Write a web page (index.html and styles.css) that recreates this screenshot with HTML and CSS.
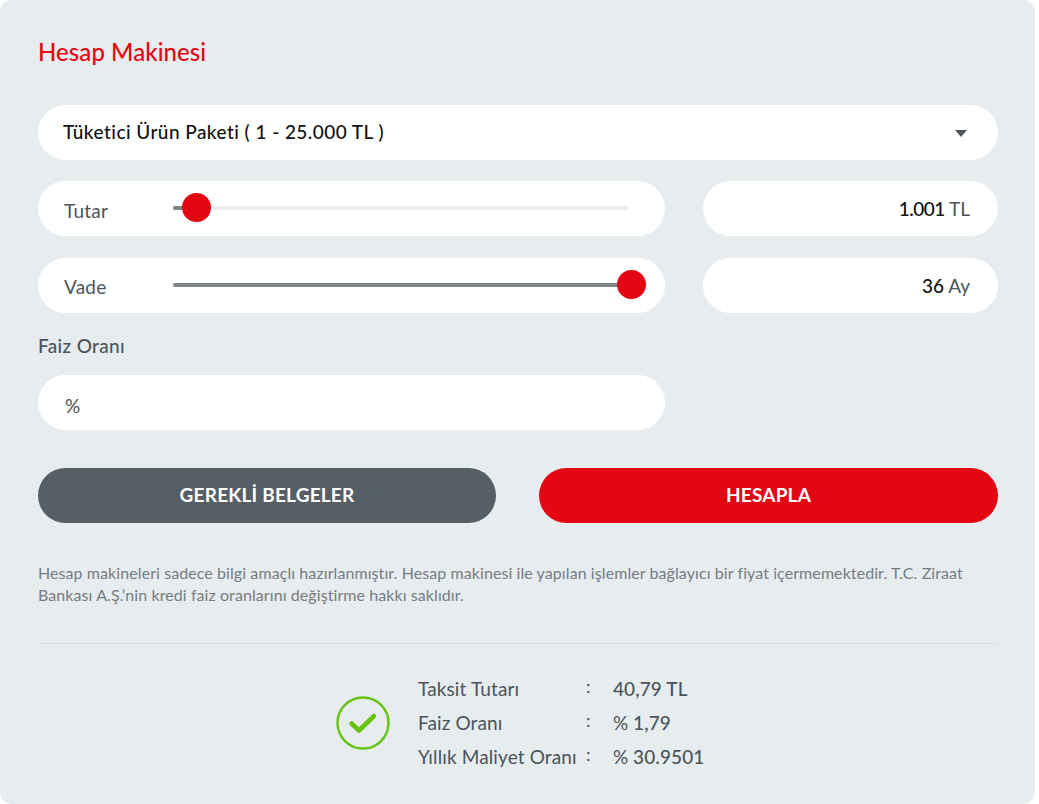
FILE: index.html
```html
<!DOCTYPE html>
<html lang="tr">
<head>
<meta charset="utf-8">
<title>Hesap Makinesi</title>
<link rel="stylesheet" href="styles.css">
</head>
<body>
<main class="card">
  <h1 class="title">Hesap Makinesi</h1>
  <div class="pill select">
    <span class="select-text">Tüketici Ürün Paketi ( 1 - 25.000 TL )</span>
    <span class="caret"></span>
  </div>
  <div class="sliders">
    <div class="pill slider-pill">
      <span class="pill-label">Tutar</span>
      <div class="track"><span class="fill fill-min"></span><span class="thumb thumb-min"></span></div>
    </div>
    <div class="pill value-pill"><b class="narrow">1.001</b> TL</div>
    <div class="pill slider-pill slider-pill-vade">
      <span class="pill-label">Vade</span>
      <div class="track"><span class="fill fill-max"></span><span class="thumb thumb-max"></span></div>
    </div>
    <div class="pill value-pill"><b>36</b> Ay</div>
  </div>
  <div class="field-label">Faiz Oranı</div>
  <div class="pill rate-pill"><span class="pill-label">%</span></div>
  <div class="buttons">
    <div class="btn btn-grey">GEREKLİ BELGELER</div>
    <div class="btn btn-red">HESAPLA</div>
  </div>
  <p class="note">Hesap makineleri sadece bilgi amaçlı hazırlanmıştır. Hesap makinesi ile yapılan işlemler bağlayıcı bir fiyat içermemektedir. T.C. Ziraat Bankası A.Ş.’nin kredi faiz oranlarını değiştirme hakkı saklıdır.</p>
  <div class="results">
    <svg class="check" width="54" height="54" viewBox="0 0 54 54" aria-hidden="true">
      <circle cx="27" cy="27" r="25.5" fill="none" stroke="#66c40f" stroke-width="2.4"/>
      <path d="M15.5 27.5 L23 34.5 L38 20" fill="none" stroke="#66c40f" stroke-width="4.6" stroke-linecap="round" stroke-linejoin="round"/>
    </svg>
    <dl class="result-grid">
      <dt>Taksit Tutarı</dt><dd class="colon">:</dd><dd class="val"><b>40,79 TL</b></dd>
      <dt>Faiz Oranı</dt><dd class="colon">:</dd><dd class="val">% <b>1,79</b></dd>
      <dt>Yıllık Maliyet Oranı</dt><dd class="colon">:</dd><dd class="val">% <b>30.9501</b></dd>
    </dl>
  </div>
</main>
</body>
</html>
```
FILE: styles.css
```css
* { box-sizing: border-box; }
html, body { margin: 0; padding: 0; background: #fff; }
body { font-family: "Lato", "Liberation Sans", sans-serif; color: #4b545a; }
.card {
  width: 1035px;
  height: 804px;
  background: #e7ecef;
  border-radius: 12px;
  padding: 37px 37px 0 38px;
}
.title {
  margin: 0;
  font-size: 24px;
  line-height: 30px;
  font-weight: 500;
  color: #e30613;
  letter-spacing: 0.07px;
}
.pill {
  background: #fff;
  height: 55px;
  border-radius: 28px;
  display: flex;
  align-items: center;
}
.select {
  margin-top: 38px;
  padding: 0 31px 0 25px;
  justify-content: space-between;
}
.select-text { font-size: 19px; line-height: 24px; margin-top: -2px; font-weight: 500; color: #111; letter-spacing: 0.45px; }
.caret {
  width: 0; height: 0;
  border-left: 6px solid transparent;
  border-right: 6px solid transparent;
  border-top: 7px solid #4f585e;
  margin-top: 2px;
}
.sliders {
  margin-top: 21px;
  display: grid;
  grid-template-columns: 627px 295px;
  column-gap: 38px;
  row-gap: 22px;
}
.slider-pill { padding-left: 26px; }
.pill-label { font-size: 19px; color: #4b545a; padding-top: 4px; letter-spacing: 0.2px; }
.slider-pill .pill-label { width: 109px; }
.slider-pill-vade .pill-label { padding-top: 2px; }
.track {
  position: relative;
  width: 455px;
  height: 4px;
  margin-top: -2px;
  background: #e7ecef;
}
.fill { position: absolute; left: 0; top: 0; height: 4px; background: #7e8488; border-radius: 2px; }
.fill-min { width: 23px; }
.fill-max { width: 100%; }
.thumb {
  position: absolute;
  top: -13px;
  width: 29px;
  height: 29px;
  border-radius: 50%;
  background: #e30613;
}
.thumb-min { left: 9px; }
.thumb-max { left: 444px; }
.value-pill {
  justify-content: flex-end;
  padding-right: 28px;
  font-size: 19px;
  color: #4b545a;
  white-space: pre;
}
.value-pill b { font-weight: 500; color: #111; }
.value-pill .narrow { letter-spacing: -0.5px; }
.field-label {
  margin-top: 22px;
  font-size: 19px;
  line-height: 22px;
  font-weight: 500;
  color: #4b545a;
  letter-spacing: 0.35px;
}
.rate-pill { margin-top: 18px; width: 627px; padding-left: 27px; }
.rate-pill .pill-label { padding-top: 6px; letter-spacing: 0; }
.buttons {
  margin-top: 38px;
  display: grid;
  grid-template-columns: 458px 459px;
  column-gap: 43px;
}
.btn {
  height: 55px;
  padding-bottom: 2px;
  border-radius: 28px;
  display: flex;
  align-items: center;
  justify-content: center;
  color: #fff;
  font-size: 19px;
  font-weight: 700;
  letter-spacing: 0.2px;
}
.btn-grey { background: #555f65; }
.btn-red { background: #e30613; }
.note {
  margin: 39px 0 0;
  width: 960px;
  font-size: 16px;
  line-height: 22px;
  color: #767d82;
  letter-spacing: 0.08px;
}
.results {
  margin-top: 37px;
  border-top: 1px solid #d9dee1;
  padding-top: 27px;
  display: flex;
  align-items: center;
  padding-left: 298px;
}
.check { flex: none; margin-right: 28px; margin-top: 1px; }
.result-grid {
  margin: 0;
  display: grid;
  grid-template-columns: 168px 27px auto;
  grid-auto-rows: 34px;
  align-items: center;
  font-size: 19px;
  color: #4b545a;
}
.result-grid dt, .result-grid dd { margin: 0; white-space: nowrap; }
.result-grid dt { letter-spacing: 0.12px; }
.result-grid b { font-weight: 500; letter-spacing: 0.1px; }
.colon { font-size: 18px; padding-bottom: 4px; }
```
